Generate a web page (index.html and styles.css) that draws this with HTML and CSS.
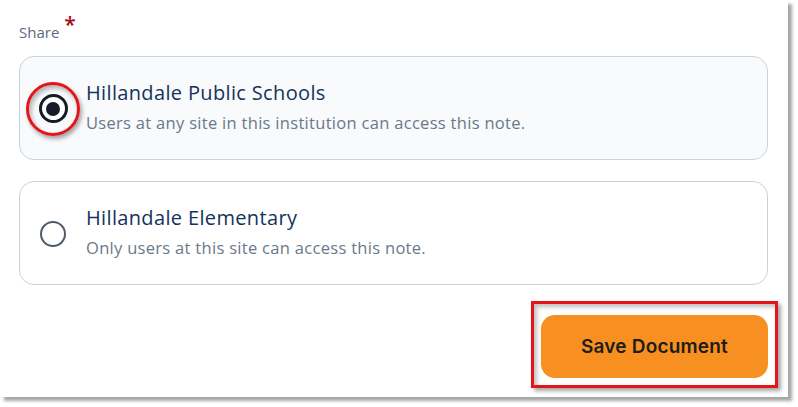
FILE: index.html
```html
<!DOCTYPE html>
<html lang="en">
<head>
<meta charset="utf-8">
<title>Share</title>
<link rel="stylesheet" href="styles.css">
</head>
<body>
<div class="frame">
  <div class="label">Share <span class="req">*</span></div>
  <div class="options">
    <label class="option selected">
      <span class="radio-wrap">
        <span class="radio checked"><span class="dot"></span></span>
        <span class="ring-callout"></span>
      </span>
      <span class="texts">
        <span class="title">Hillandale Public Schools</span>
        <span class="desc">Users at any site in this institution can access this note.</span>
      </span>
    </label>
    <label class="option">
      <span class="radio-wrap">
        <span class="radio"></span>
      </span>
      <span class="texts">
        <span class="title">Hillandale Elementary</span>
        <span class="desc">Only users at this site can access this note.</span>
      </span>
    </label>
  </div>
  <div class="actions">
    <div class="btn-wrap">
      <button class="save">Save Document</button>
      <span class="box-callout"></span>
    </div>
  </div>
</div>
</body>
</html>
```

FILE: styles.css
```css
html, body {
  margin: 0;
  padding: 0;
  background: #ffffff;
}
body {
  width: 798px;
  height: 407px;
  overflow: hidden;
  font-family: "Open Sans", "Lato", sans-serif;
}
.frame {
  box-sizing: border-box;
  width: 788px;
  height: 397px;
  background: #ffffff;
  box-shadow: 4px 4px 3px rgba(0, 0, 0, 0.35);
  padding: 22px 20px 0 19px;
  display: flex;
  flex-direction: column;
}
.label {
  font-size: 15px;
  font-weight: 500;
  color: #5a6a7e;
  line-height: 20px;
  height: 20px;
}
.req {
  color: #a8101a;
  font-size: 21px;
  font-weight: 600;
  position: relative;
  top: -6px;
  margin-left: 1px;
  line-height: 10px;
}
.options {
  display: flex;
  flex-direction: column;
  gap: 21px;
  margin-top: 14px;
}
.option {
  box-sizing: border-box;
  height: 104px;
  border: 1px solid #c8d2dd;
  border-radius: 15px;
  background: #ffffff;
  display: flex;
  align-items: center;
  padding-left: 20px;
  padding-top: 1px;
}
.option.selected {
  background: #f8fafc;
}
.radio-wrap {
  position: relative;
  width: 26px;
  height: 26px;
  display: flex;
  align-items: center;
  justify-content: center;
  margin-right: 20px;
}
.radio {
  box-sizing: border-box;
  width: 26px;
  height: 26px;
  border-radius: 50%;
  border: 2px solid #4f5b6c;
  background: #ffffff;
  flex: none;
}
.radio.checked {
  width: 29px;
  height: 29px;
  border: 3px solid #161b26;
  display: flex;
  align-items: center;
  justify-content: center;
}
.dot {
  width: 14px;
  height: 14px;
  border-radius: 50%;
  background: #161b26;
}
.ring-callout {
  position: absolute;
  left: -14px;
  top: -14px;
  width: 48px;
  height: 48px;
  border: 3px solid #e4141b;
  border-radius: 50%;
  box-shadow: 2px 3px 4px rgba(0, 0, 0, 0.35), inset 2px 3px 5px rgba(0, 0, 0, 0.3);
  pointer-events: none;
}
.texts {
  display: flex;
  flex-direction: column;
  gap: 8px;
  margin-top: -4px;
}
.title {
  font-size: 20px;
  font-weight: 500;
  color: #15335a;
  line-height: 24px;
  letter-spacing: 0.35px;
}
.desc {
  font-size: 16.5px;
  font-weight: 400;
  color: #6b7889;
  line-height: 20px;
  letter-spacing: 0.3px;
}
.actions {
  display: flex;
  justify-content: flex-end;
  margin-top: 30px;
}
.btn-wrap {
  position: relative;
}
.save {
  display: block;
  width: 227px;
  height: 63px;
  border: none;
  border-radius: 14px;
  background: #f79020;
  color: #1c1c1c;
  font-family: "Inter", "Lato", sans-serif;
  font-size: 19px;
  font-weight: 600;
  letter-spacing: 0.2px;
  padding: 0;
  cursor: pointer;
}
.box-callout {
  position: absolute;
  left: -10px;
  top: -14px;
  right: -10px;
  bottom: -10px;
  border: 3px solid #e4141b;
  box-shadow: 3px 3px 4px rgba(0, 0, 0, 0.35), inset 3px 3px 4px rgba(0, 0, 0, 0.25);
  pointer-events: none;
}
```
